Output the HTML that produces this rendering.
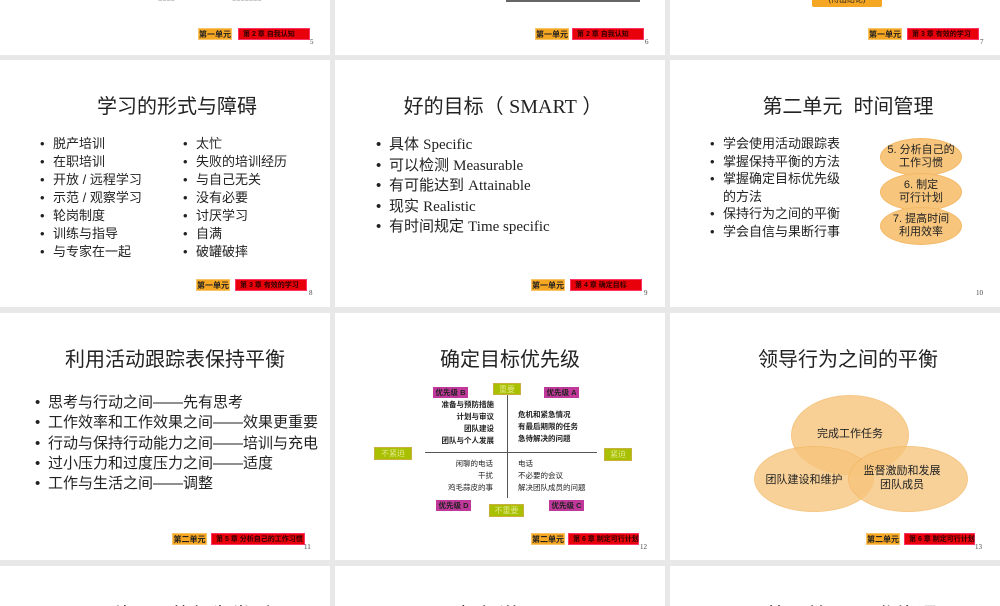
<!DOCTYPE html>
<html><head><meta charset="utf-8"><style>
*{margin:0;padding:0;box-sizing:border-box}
body{width:1000px;height:600px;background:#e8e8e8;position:relative;overflow:hidden;font-family:"Liberation Sans","Noto Sans CJK SC",sans-serif;color:#222}
.p{position:absolute;background:#fff;overflow:hidden}
.a{position:absolute;white-space:nowrap}
.t{font-size:20px;color:#222;transform:translateX(-50%)}
.or{position:absolute;background:#f5a623;border:1px solid #f8c46a;font-size:8px;font-weight:bold;line-height:11px;text-align:center;color:#222}
.rd{position:absolute;background:#e8000b;border:1px solid #f36;font-size:7px;font-weight:bold;line-height:11px;padding-left:4px;color:#300;white-space:nowrap}
.n{position:absolute;font-size:7px;color:#444;font-family:"Liberation Serif",serif}
.ul{position:absolute;font-size:13px;line-height:18px}
.ul div{position:relative;padding-left:13px;white-space:nowrap}
.ul div:before{content:"•";position:absolute;left:0}
.g{position:absolute;background:#a8c000;border:1px solid #c8b040;color:#dfe98a;font-size:8px;line-height:11px;text-align:center}
.m{position:absolute;background:#c0399a;color:#222;font-size:7.5px;font-weight:bold;line-height:11px;text-align:center}
.q{position:absolute;font-size:7.5px;line-height:12px;white-space:nowrap}
.el{position:absolute;border-radius:50%;background:#f7c57c;border:1px solid #f3b866}
.se{font-family:"Liberation Serif",serif}
</style></head><body>
<!-- row 1 -->
<div class="p" style="left:0;top:0;width:330px;height:55px">
<div class="a" style="left:158px;top:-4px;font-size:7px;color:#999">■■■■</div>
<div class="a" style="left:232px;top:-4px;font-size:7px;color:#999">■■■■■■■</div>
<div class="or" style="left:198px;top:28px;width:34px;height:12px">第一单元</div>
<div class="rd" style="left:238px;top:28px;width:72px;height:12px">第 2 章 自我认知</div>
<div class="n" style="left:310px;top:38px">5</div>
</div>
<div class="p" style="left:335px;top:0;width:330px;height:55px">
<div class="a" style="left:171px;top:0;width:134px;height:2px;background:#666"></div>
<div class="or" style="left:200px;top:28px;width:34px;height:12px">第一单元</div>
<div class="rd" style="left:237px;top:28px;width:72px;height:12px">第 2 章 自我认知</div>
<div class="n" style="left:310px;top:38px">6</div>
</div>
<div class="p" style="left:670px;top:0;width:330px;height:55px">
<div class="a" style="left:142px;top:-6px;width:70px;height:13px;background:#f5a623;border-radius:2px;font-size:8px;text-align:center;line-height:12px">(待出结论)</div>
<div class="or" style="left:198px;top:28px;width:34px;height:12px">第一单元</div>
<div class="rd" style="left:237px;top:28px;width:72px;height:12px">第 3 章 有效的学习</div>
<div class="n" style="left:310px;top:38px">7</div>
</div>
<!-- row 2 -->
<div class="p" style="left:0;top:60px;width:330px;height:247px">
<div class="a t" style="left:177px;top:30px">学习的形式与障碍</div>
<div class="ul" style="left:40px;top:75px"><div>脱产培训</div><div>在职培训</div><div>开放 / 远程学习</div><div>示范 / 观察学习</div><div>轮岗制度</div><div>训练与指导</div><div>与专家在一起</div></div>
<div class="ul" style="left:183px;top:75px"><div>太忙</div><div>失败的培训经历</div><div>与自己无关</div><div>没有必要</div><div>讨厌学习</div><div>自满</div><div>破罐破摔</div></div>
<div class="or" style="left:196px;top:219px;width:34px;height:12px">第一单元</div>
<div class="rd" style="left:235px;top:219px;width:72px;height:12px">第 3 章 有效的学习</div>
<div class="n" style="left:309px;top:229px">8</div>
</div>
<div class="p" style="left:335px;top:60px;width:330px;height:247px">
<div class="a t" style="left:168px;top:30px">好的目标（ <span class="se">SMART</span> ）</div>
<div class="ul" style="left:41px;top:75px;font-size:15px;line-height:20.5px"><div>具体 <span class="se"> Specific</span></div><div>可以检测 <span class="se"> Measurable</span></div><div>有可能达到 <span class="se"> Attainable</span></div><div>现实 <span class="se"> Realistic</span></div><div>有时间规定 <span class="se"> Time specific</span></div></div>
<div class="or" style="left:196px;top:219px;width:34px;height:12px">第一单元</div>
<div class="rd" style="left:235px;top:219px;width:72px;height:12px">第 4 章 确定目标</div>
<div class="n" style="left:309px;top:229px">9</div>
</div>
<div class="p" style="left:670px;top:60px;width:330px;height:247px">
<div class="a t" style="left:178px;top:30px">第二单元&nbsp; 时间管理</div>
<div class="ul" style="left:40px;top:75px;line-height:17.5px"><div>学会使用活动跟踪表</div><div>掌握保持平衡的方法</div><div>掌握确定目标优先级<br>的方法</div><div>保持行为之间的平衡</div><div>学会自信与果断行事</div></div>
<div class="el" style="left:210px;top:78px;width:82px;height:38px"></div>
<div class="el" style="left:210px;top:113px;width:82px;height:38px"></div>
<div class="el" style="left:210px;top:147px;width:82px;height:38px"></div>
<div class="a" style="left:213px;top:84px;width:76px;text-align:center;font-size:11px;line-height:13px">5. 分析自己的<br>工作习惯</div>
<div class="a" style="left:213px;top:119px;width:76px;text-align:center;font-size:11px;line-height:13px">6. 制定<br>可行计划</div>
<div class="a" style="left:213px;top:153px;width:76px;text-align:center;font-size:11px;line-height:13px">7. 提高时间<br>利用效率</div>
<div class="n" style="left:306px;top:229px">10</div>
</div>
<!-- row 3 -->
<div class="p" style="left:0;top:313px;width:330px;height:247px">
<div class="a t" style="left:175px;top:30px">利用活动跟踪表保持平衡</div>
<div class="ul" style="left:35px;top:80px;font-size:15px;line-height:20.3px"><div>思考与行动之间——先有思考</div><div>工作效率和工作效果之间——效果更重要</div><div>行动与保持行动能力之间——培训与充电</div><div>过小压力和过度压力之间——适度</div><div>工作与生活之间——调整</div></div>
<div class="or" style="left:172px;top:220px;width:35px;height:12px">第二单元</div>
<div class="rd" style="left:211px;top:220px;width:94px;height:12px">第 5 章 分析自己的工作习惯</div>
<div class="n" style="left:304px;top:230px">11</div>
</div>
<div class="p" style="left:335px;top:313px;width:330px;height:247px">
<div class="a t" style="left:175px;top:30px">确定目标优先级</div>
<div class="a" style="left:90px;top:139px;width:172px;height:1px;background:#555"></div>
<div class="a" style="left:172px;top:75px;width:1px;height:110px;background:#555"></div>
<div class="g" style="left:158px;top:70px;width:28px;height:12px">重要</div>
<div class="g" style="left:39px;top:134px;width:38px;height:13px">不紧迫</div>
<div class="g" style="left:269px;top:135px;width:28px;height:13px">紧迫</div>
<div class="g" style="left:154px;top:191px;width:35px;height:13px">不重要</div>
<div class="m" style="left:98px;top:74px;width:35px">优先级 B</div>
<div class="m" style="left:209px;top:74px;width:35px">优先级 A</div>
<div class="m" style="left:101px;top:187px;width:35px">优先级 D</div>
<div class="m" style="left:214px;top:187px;width:35px">优先级 C</div>
<div class="q" style="right:171px;top:86px;text-align:right;font-weight:bold">准备与预防措施<br>计划与审议<br>团队建设<br>团队与个人发展</div>
<div class="q" style="left:183px;top:96px;font-weight:bold">危机和紧急情况<br>有最后期限的任务<br>急待解决的问题</div>
<div class="q" style="right:172px;top:145px;text-align:right">闲聊的电话<br>干扰<br>鸡毛蒜皮的事</div>
<div class="q" style="left:183px;top:145px">电话<br>不必要的会议<br>解决团队成员的问题</div>
<div class="or" style="left:196px;top:220px;width:34px;height:12px">第二单元</div>
<div class="rd" style="left:233px;top:220px;width:71px;height:12px">第 6 章 制定可行计划</div>
<div class="n" style="left:305px;top:230px">12</div>
</div>
<div class="p" style="left:670px;top:313px;width:330px;height:247px">
<div class="a t" style="left:178px;top:30px">领导行为之间的平衡</div>
<div class="el" style="left:121px;top:82px;width:118px;height:80px;opacity:.8"></div>
<div class="el" style="left:84px;top:133px;width:120px;height:66px;opacity:.78"></div>
<div class="el" style="left:178px;top:133px;width:120px;height:66px;opacity:.78"></div>
<div class="a" style="left:180px;top:112px;font-size:11px;transform:translateX(-50%)">完成工作任务</div>
<div class="a" style="left:134px;top:158px;font-size:11px;transform:translateX(-50%)">团队建设和维护</div>
<div class="a" style="left:232px;top:151px;font-size:11px;line-height:14px;text-align:center;transform:translateX(-50%)">监督激励和发展<br>团队成员</div>
<div class="or" style="left:196px;top:220px;width:34px;height:12px">第二单元</div>
<div class="rd" style="left:234px;top:220px;width:71px;height:12px">第 6 章 制定可行计划</div>
<div class="n" style="left:305px;top:230px">13</div>
</div>
<!-- row 4 -->
<div class="p" style="left:0;top:566px;width:330px;height:40px">
<div class="a t" style="left:181px;top:33px">三种不同的行为类型</div>
</div>
<div class="p" style="left:335px;top:566px;width:330px;height:40px">
<div class="a t" style="left:170px;top:33px">如何说“不”</div>
</div>
<div class="p" style="left:670px;top:566px;width:330px;height:40px">
<div class="a t" style="left:182px;top:33px">第三单元&nbsp; 工作沟通</div>
</div>
</body></html>
